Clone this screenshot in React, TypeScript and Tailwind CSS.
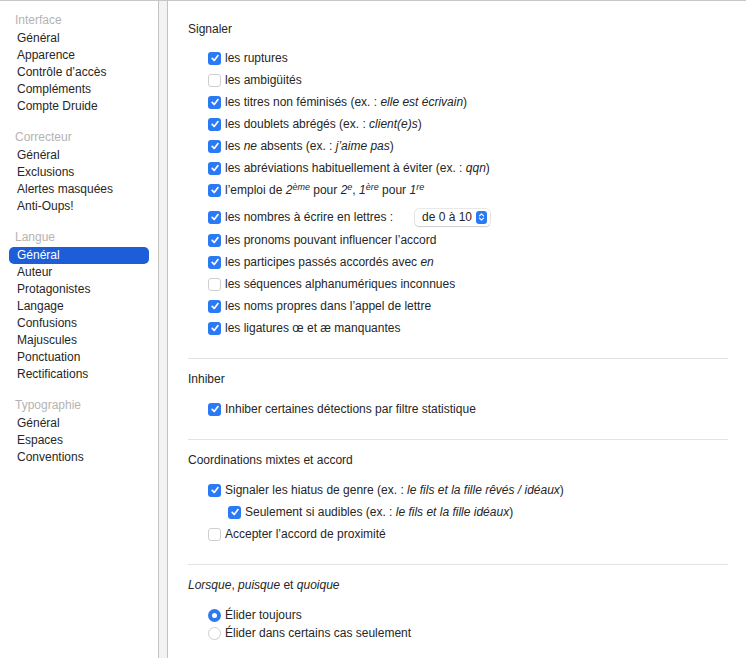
import clsx from 'clsx';
import type { ReactNode } from 'react';

// ─── Données de la barre latérale ────────────────────────────────────────────

const SIDEBAR: { title: string; items: string[] }[] = [
  { title: 'Interface', items: ['Général', 'Apparence', 'Contrôle d’accès', 'Compléments', 'Compte Druide'] },
  { title: 'Correcteur', items: ['Général', 'Exclusions', 'Alertes masquées', 'Anti-Oups!'] },
  {
    title: 'Langue',
    items: ['Général', 'Auteur', 'Protagonistes', 'Langage', 'Confusions', 'Majuscules', 'Ponctuation', 'Rectifications'],
  },
  { title: 'Typographie', items: ['Général', 'Espaces', 'Conventions'] },
];

// ─── Contrôles ───────────────────────────────────────────────────────────────

function Checkbox({ checked }: { checked: boolean }) {
  return (
    <span
      className={clsx(
        'flex h-[13px] w-[13px] shrink-0 items-center justify-center rounded-[3px]',
        checked ? 'bg-[#2a7af5]' : 'border border-[#cfcfcf] bg-white'
      )}
    >
      {checked && (
        <svg viewBox="0 0 10 10" className="h-[10px] w-[10px]">
          <path
            d="M2.2 5.4 L4.2 7.5 L8 2.6"
            stroke="white"
            strokeWidth="1.7"
            fill="none"
            strokeLinecap="round"
            strokeLinejoin="round"
          />
        </svg>
      )}
    </span>
  );
}

function Row({ checked, children, className }: { checked: boolean; children: ReactNode; className?: string }) {
  return (
    <div className={clsx('flex h-[22px] items-center gap-[4px]', className)}>
      <Checkbox checked={checked} />
      <span>{children}</span>
    </div>
  );
}

function Radio({ selected, children }: { selected: boolean; children: ReactNode }) {
  return (
    <div className="flex h-[18px] items-center gap-[4px]">
      <span
        className={clsx(
          'flex h-[13px] w-[13px] shrink-0 items-center justify-center rounded-full',
          selected ? 'bg-[#2a7af5]' : 'border border-[#cfcfcf] bg-white'
        )}
      >
        {selected && <span className="h-[5px] w-[5px] rounded-full bg-white" />}
      </span>
      <span>{children}</span>
    </div>
  );
}

function Section({ title, children, last }: { title: ReactNode; children: ReactNode; last?: boolean }) {
  return (
    <section className={clsx('pt-[12px]', !last && 'border-b border-[#e3e3e3] pb-[19px]')}>
      <h2 className="h-[16px] leading-[16px]">{title}</h2>
      {children}
    </section>
  );
}

// ─── Page ────────────────────────────────────────────────────────────────────

export default function App() {
  return (
    <div
      className="flex h-[658px] w-[746px] overflow-hidden border-t border-[#c6c6c6] bg-white text-[12px] text-[#262626]"
      style={{ fontFamily: '"Liberation Sans", Arial, sans-serif' }}
    >
      {/* Barre latérale */}
      <aside className="w-[159px] shrink-0 border-r border-[#c2c2c2] bg-white pt-[10px]">
        {SIDEBAR.map((group, gi) => (
          <div key={group.title} className={clsx(gi > 0 && 'mt-[13px]')}>
            <div className="h-[19px] pl-[15px] leading-[18px] text-[#b4b4b4]">{group.title}</div>
            {group.items.map((item) => {
              const active = group.title === 'Langue' && item === 'Général';
              return (
                <div
                  key={item}
                  className={clsx(
                    'mx-[9px] h-[17px] rounded-[5px] pl-[8px] leading-[17px]',
                    active && 'bg-[#1d5ed8] text-white'
                  )}
                >
                  {item}
                </div>
              );
            })}
          </div>
        ))}
      </aside>

      {/* Séparateur */}
      <div className="w-[9px] shrink-0 border-r border-[#c2c2c2] bg-[#f3f3f3]" />

      {/* Contenu */}
      <main className="flex-1 pl-[20px] pr-[18px] pt-[8px]">
        <Section title="Signaler">
          <div className="mt-[10px] pl-[20px]">
            <Row checked>les ruptures</Row>
            <Row checked={false}>les ambigüités</Row>
            <Row checked>
              les titres non féminisés (ex. : <i>elle est écrivain</i>)
            </Row>
            <Row checked>
              les doublets abrégés (ex. : <i>client(e)s</i>)
            </Row>
            <Row checked>
              les <i>ne</i> absents (ex. : <i>j’aime pas</i>)
            </Row>
            <Row checked>
              les abréviations habituellement à éviter (ex. : <i>qqn</i>)
            </Row>
            <Row checked>
              l’emploi de{' '}
              <i>
                2<sup className="text-[9px]">ème</sup>
              </i>{' '}
              pour{' '}
              <i>
                2<sup className="text-[9px]">e</sup>
              </i>
              ,{' '}
              <i>
                1<sup className="text-[9px]">ère</sup>
              </i>{' '}
              pour{' '}
              <i>
                1<sup className="text-[9px]">re</sup>
              </i>
            </Row>
            <div className="mt-[4px] flex h-[24px] items-center gap-[4px]">
              <Checkbox checked />
              <span className="w-[186px]">les nombres à écrire en lettres :</span>
              <button
                type="button"
                className="flex h-[17px] w-[75px] items-center justify-between rounded-[4px] bg-white pl-[7px] pr-[3px] shadow-[0_0_0_0.5px_rgba(0,0,0,0.18),0_1px_1.5px_rgba(0,0,0,0.12)]"
              >
                <span>de 0 à 10</span>
                <span className="flex h-[13px] w-[11px] items-center justify-center rounded-[3px] bg-[#2a7af5]">
                  <svg viewBox="0 0 8 12" className="h-[10px] w-[7px]">
                    <path
                      d="M1.6 4.6 L4 2.3 L6.4 4.6 M1.6 7.4 L4 9.7 L6.4 7.4"
                      stroke="white"
                      strokeWidth="1.3"
                      fill="none"
                      strokeLinecap="round"
                      strokeLinejoin="round"
                    />
                  </svg>
                </span>
              </button>
            </div>
            <Row checked>les pronoms pouvant influencer l’accord</Row>
            <Row checked>
              les participes passés accordés avec <i>en</i>
            </Row>
            <Row checked={false}>les séquences alphanumériques inconnues</Row>
            <Row checked>les noms propres dans l’appel de lettre</Row>
            <Row checked>les ligatures œ et æ manquantes</Row>
          </div>
        </Section>

        <Section title="Inhiber">
          <div className="mt-[11px] pl-[20px]">
            <Row checked>Inhiber certaines détections par filtre statistique</Row>
          </div>
        </Section>

        <Section title="Coordinations mixtes et accord">
          <div className="mt-[11px] pl-[20px]">
            <Row checked>
              Signaler les hiatus de genre (ex. : <i>le fils et la fille rêvés / idéaux</i>)
            </Row>
            <Row checked className="pl-[20px]">
              Seulement si audibles (ex. : <i>le fils et la fille idéaux</i>)
            </Row>
            <Row checked={false}>Accepter l’accord de proximité</Row>
          </div>
        </Section>

        <Section
          last
          title={
            <>
              <i>Lorsque</i>, <i>puisque</i> et <i>quoique</i>
            </>
          }
        >
          <div className="mt-[13px] pl-[20px]">
            <Radio selected>Élider toujours</Radio>
            <Radio selected={false}>Élider dans certains cas seulement</Radio>
          </div>
        </Section>
      </main>
    </div>
  );
}
